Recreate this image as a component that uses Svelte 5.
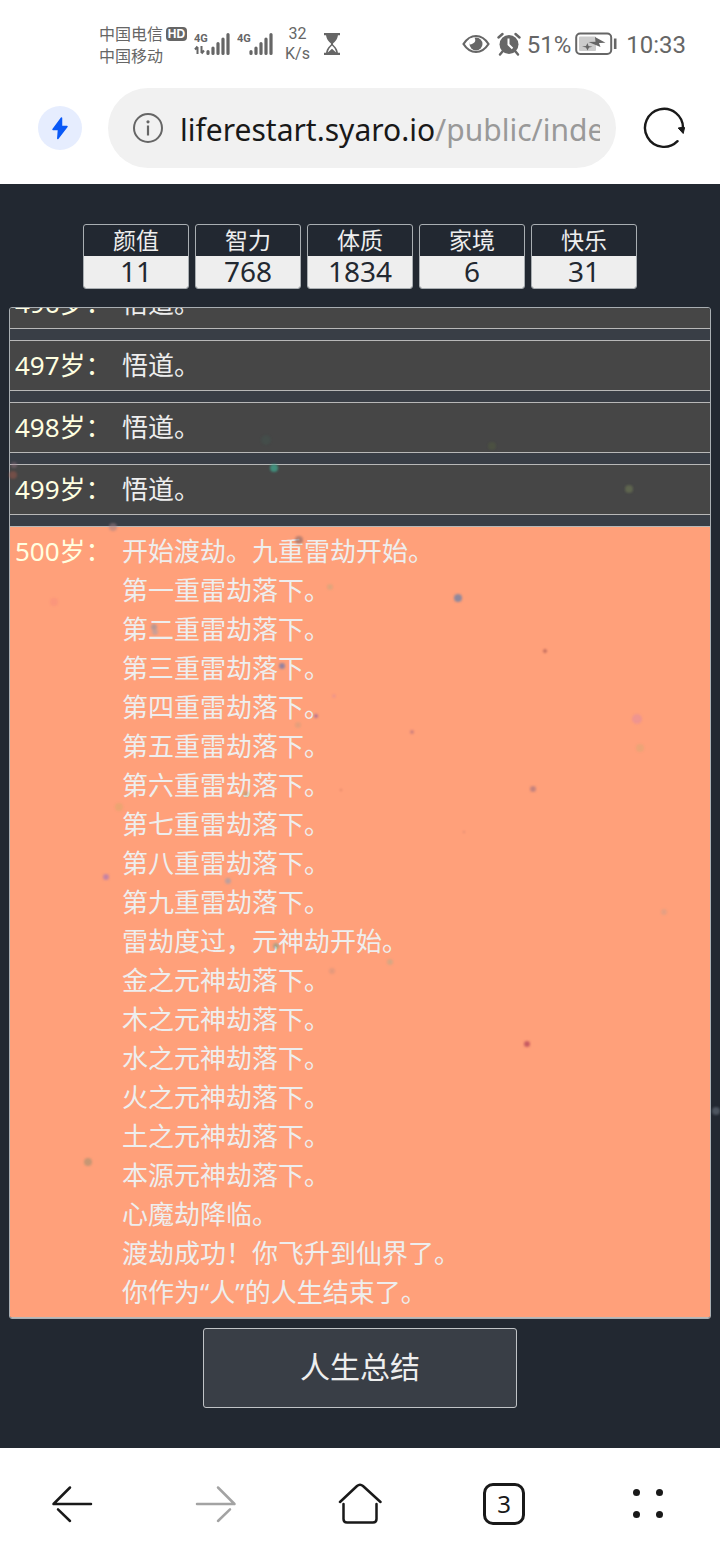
<script>
  const stats = [
    { name: '颜值', value: 11 },
    { name: '智力', value: 768 },
    { name: '体质', value: 1834 },
    { name: '家境', value: 6 },
    { name: '快乐', value: 31 }
  ];

  const years = [
    { age: 496, events: ['悟道。'] },
    { age: 497, events: ['悟道。'] },
    { age: 498, events: ['悟道。'] },
    { age: 499, events: ['悟道。'] },
    {
      age: 500,
      grade: 3,
      events: [
        '开始渡劫。九重雷劫开始。',
        '第一重雷劫落下。',
        '第二重雷劫落下。',
        '第三重雷劫落下。',
        '第四重雷劫落下。',
        '第五重雷劫落下。',
        '第六重雷劫落下。',
        '第七重雷劫落下。',
        '第八重雷劫落下。',
        '第九重雷劫落下。',
        '雷劫度过，元神劫开始。',
        '金之元神劫落下。',
        '木之元神劫落下。',
        '水之元神劫落下。',
        '火之元神劫落下。',
        '土之元神劫落下。',
        '本源元神劫落下。',
        '心魔劫降临。',
        '渡劫成功！你飞升到仙界了。',
        '你作为“人”的人生结束了。'
      ]
    }
  ];

  const particles = [
    [274, 284, 4, '#3fa08a', 0.8],
    [266, 256, 5, '#3f6a5c', 0.2],
    [13, 291, 4, '#a0584a', 0.5],
    [14, 281, 3, '#a07a8a', 0.4],
    [113, 343, 4, '#a08088', 0.5],
    [299, 356, 4, '#8a6a6a', 0.6],
    [492, 262, 4, '#5a6a3a', 0.3],
    [629, 305, 4, '#6f7a55', 0.6],
    [458, 414, 4, '#6a80a8', 0.75],
    [545, 467, 2, '#a05050', 0.6],
    [637, 535, 5, '#d080b8', 0.35],
    [640, 564, 4, '#c0b070', 0.3],
    [412, 548, 2, '#a06080', 0.5],
    [533, 605, 3, '#a07080', 0.6],
    [154, 443, 3, '#7090b0', 0.5],
    [155, 448, 3, '#80a0c0', 0.4],
    [282, 482, 3, '#5070b8', 0.6],
    [316, 532, 2, '#9060a0', 0.7],
    [334, 512, 2, '#d080b0', 0.3],
    [298, 541, 3, '#b0a080', 0.3],
    [330, 403, 3, '#a0b080', 0.3],
    [54, 418, 4, '#f08080', 0.3],
    [246, 610, 3, '#90a070', 0.4],
    [119, 623, 4, '#c0b060', 0.3],
    [106, 693, 3, '#a070c0', 0.6],
    [228, 697, 3, '#80a0c0', 0.5],
    [276, 762, 3, '#60a090', 0.5],
    [390, 778, 3, '#a0b090', 0.4],
    [332, 787, 3, '#c09080', 0.4],
    [664, 728, 3, '#c0a090', 0.4],
    [341, 606, 1, '#b06050', 0.5],
    [464, 648, 1, '#b07070', 0.5],
    [527, 860, 3, '#b04058', 0.7],
    [88, 978, 4, '#a09070', 0.6],
    [716, 927, 4, '#6a7480', 0.6]
  ];
</script>

{#snippet signal(data)}
  <svg class="signal" viewBox="0 0 38 26" aria-hidden="true">
    <text x="0" y="11">4G</text>
    {#if data}
      <path d="M3.5 23v-7M1 18.5l2.5-3M7.5 15v7M10 19.5l-2.5 3" fill="none" stroke="currentColor" stroke-width="2" />
    {/if}
    <path
      d="M14 20.500v2M19 17v5.500M24 12.500v10M29 8v14.500M34 3.500v19"
      fill="none"
      stroke="currentColor"
      stroke-width="3.200"
      stroke-linecap="round"
    />
  </svg>
{/snippet}

<div class="phone">
  <header class="status">
    <div class="carrier">
      <span>中国电信</span>
      <span>中国移动</span>
    </div>
    <span class="hd">HD</span>
    {@render signal(true)}
    {@render signal(false)}
    <div class="speed">
      <span>32</span>
      <span>K/s</span>
    </div>
    <svg class="hourglass" viewBox="0 0 18 22" aria-hidden="true">
      <path d="M1 1.200h16M1 20.800h16" stroke="currentColor" stroke-width="2.200" />
      <path d="M3 1h12c0 5-3 7.500-5 9.500v1c2 2 5 4.500 5 9.500H3c0-5 3-7.500 5-9.500v-1C6 8.500 3 6 3 1z" fill="currentColor" />
      <path d="M4.800 19.500c.5-3 2.200-5.200 4.200-7 2 1.800 3.700 4 4.200 7L9 15.800z" fill="#fff" />
    </svg>

    <div class="right">
      <svg class="eye" viewBox="0 0 28 20" aria-hidden="true">
        <path d="M1.500 10C5 4.500 9 2 14 2s9 2.500 12.500 8C23 15.500 19 18 14 18S5 15.500 1.500 10z" fill="none" stroke="currentColor" stroke-width="2.200" />
        <circle cx="14" cy="10" r="6.500" fill="currentColor" />
        <path d="M12.500 3.500c1.800 3 .5 6.500-5 7L7 5z" fill="#fff" />
      </svg>
      <svg class="alarm" viewBox="0 0 24 24" aria-hidden="true">
        <circle cx="12" cy="12.500" r="9.500" fill="currentColor" />
        <path d="M1.500 5.500 5.500 2M22.500 5.500 18.500 2M5.500 19.500 3 22.500M18.500 19.500l2.500 3" stroke="currentColor" stroke-width="2.400" stroke-linecap="round" />
        <path d="M11.500 6.500v6l4 4" fill="none" stroke="#fff" stroke-width="2" />
      </svg>
      <span>51%</span>
      <svg class="battery" viewBox="0 0 42 24" aria-hidden="true">
        <rect x="1.200" y="1.500" width="35" height="20.500" rx="4" fill="none" stroke="currentColor" stroke-width="2" />
        <rect x="4" y="4.500" width="17" height="14.500" rx="1" fill="#ccc" />
        <path d="M13.500 10l7-.2L20 5l10.500 5.800-6.500.2L25.500 15z" fill="currentColor" />
        <path d="M7 14.500l4-.5L12.500 11l1 3 4 .8-3.500.7-1.500 3-1.500-3z" fill="currentColor" />
        <path d="M40.200 6.500v10.500" stroke="currentColor" stroke-width="2.600" />
      </svg>
      <time>10:33</time>
    </div>
  </header>

  <div class="address">
    <button class="boost" aria-label="加速">
      <svg viewBox="0 0 44 44" aria-hidden="true">
        <path d="M23.500 12 15 23.500h5.500L19.800 32.500 29 20.500h-5.500z" fill="#0a59f7" stroke="#0a59f7" stroke-width="1.500" stroke-linejoin="round" />
      </svg>
    </button>
    <button class="url">
      <svg viewBox="0 0 32 32" aria-hidden="true">
        <circle cx="16" cy="16" r="14" fill="none" stroke="#666" stroke-width="2" />
        <circle cx="16" cy="9.800" r="1.600" fill="#666" />
        <path d="M16 13.500v10" stroke="#666" stroke-width="2.200" />
      </svg>
      <span class="text">liferestart.syaro.io<span class="path">/public/index.html</span></span>
    </button>
    <button class="reload" aria-label="刷新">
      <svg viewBox="0 0 44 44" aria-hidden="true">
        <path d="M35.500 35.200A19 19 0 1 1 41 22.500" fill="none" stroke="#191919" stroke-width="2.400" stroke-linecap="round" />
        <path d="M36.200 22l5.800-1 .5 1-1.300 5.500z" fill="#191919" stroke="#191919" stroke-linejoin="round" />
      </svg>
    </button>
  </div>

  <main>
    <ul class="stats">
      {#each stats as stat}
        <li><span class="name">{stat.name}</span><span class="value">{stat.value}</span></li>
      {/each}
    </ul>

    <div class="trajectory">
      <ol>
        {#each years as year}
          <li class:grade3={year.grade === 3}>
            <span class="age">{year.age}岁：</span>
            <div class="events">
              {#each year.events as event}
                <p>{event}</p>
              {/each}
            </div>
          </li>
        {/each}
      </ol>
    </div>

    <button class="summary">人生总结</button>

    <svg class="particles" aria-hidden="true">
      {#each particles as [x, y, r, color, opacity]}
        <circle cx={x} cy={y} {r} fill={color} {opacity} />
      {/each}
    </svg>
  </main>

  <nav>
    <button aria-label="后退">
      <svg viewBox="0 0 44 44" aria-hidden="true">
        <path d="M41 22H4M20 5.500 3.500 22M8 27.300 20 39" />
      </svg>
    </button>
    <button aria-label="前进" disabled>
      <svg viewBox="0 0 44 44" aria-hidden="true">
        <path d="M3 22H40M24 5.500 40.500 22M36 27.300 24 39" />
      </svg>
    </button>
    <button aria-label="主页">
      <svg viewBox="0 0 44 44" aria-hidden="true">
        <path d="M2 20 19 4q3-2.500 6 0L42.500 20M5.500 22v15q0 3.500 3.500 3.500h26q3.500 0 3.500-3.500V22" />
      </svg>
    </button>
    <button aria-label="标签页"><span class="tabs">3</span></button>
    <button aria-label="菜单">
      <svg class="dots" viewBox="0 0 44 44" aria-hidden="true">
        <circle cx="10.500" cy="10.500" r="3.500" />
        <circle cx="33.500" cy="10.500" r="3.500" />
        <circle cx="10.500" cy="32.500" r="3.500" />
        <circle cx="33.500" cy="32.500" r="3.500" />
      </svg>
    </button>
  </nav>
</div>

<style>
  :global(body) {
    background: #fff;
  }

  .phone {
    display: flex;
    flex-direction: column;
    height: 100vh;
    font-family: 'Noto Sans', 'Noto Sans CJK SC', sans-serif;
  }

  button {
    margin: 0;
    padding: 0;
    border: 0;
    background: none;
    font: inherit;
    color: inherit;
  }

  svg {
    display: block;
    flex: none;
  }

  ul,
  ol,
  p {
    margin: 0;
    padding: 0;
    list-style: none;
  }

  .status {
    display: flex;
    align-items: center;
    flex: none;
    height: 88px;
    padding: 0 34px 0 99px;
    color: #666;
    font-family: 'Noto Sans CJK SC', sans-serif;
  }

  .carrier,
  .speed {
    display: flex;
    flex-direction: column;
    font-size: 16px;
    line-height: 22px;
  }

  .hd {
    align-self: flex-start;
    margin: 27px 7px 0 3px;
    width: 21px;
    border-radius: 4px;
    background: #666;
    color: #fff;
    font: bold 12px/14px 'Liberation Sans', sans-serif;
    text-align: center;
  }

  .signal {
    width: 38px;
    height: 26px;
    margin-right: 5px;
  }

  .signal text {
    font: bold 11px Roboto, 'Liberation Sans', sans-serif;
    fill: currentColor;
  }

  .speed {
    align-items: center;
    line-height: 20px;
    margin-left: 5px;
    font-family: Roboto, sans-serif;
  }

  .hourglass {
    width: 18px;
    height: 22px;
    margin-left: 13px;
  }

  .right {
    display: flex;
    align-items: center;
    margin-left: auto;
    font-family: Roboto, sans-serif;
    font-size: 24px;
    line-height: 24px;
  }

  .right span,
  .right time {
    padding-top: 2px;
  }

  .eye {
    width: 28px;
    height: 20px;
  }

  .alarm {
    width: 24px;
    height: 24px;
    margin: 0 6px 0 7px;
  }

  .battery {
    width: 42px;
    height: 24px;
    margin: 0 9px 0 4px;
  }

  .address {
    display: flex;
    align-items: center;
    flex: none;
    gap: 26px;
    padding: 0 34px 16px 38px;
  }

  .boost {
    border-radius: 50%;
    background: #e6edfe;
  }

  .boost svg,
  .reload svg {
    width: 44px;
    height: 44px;
  }

  .url {
    display: flex;
    align-items: center;
    flex: 1;
    min-width: 0;
    gap: 16px;
    height: 80px;
    padding: 0 16px 0 24px;
    border-radius: 40px;
    background: #f1f1f1;
    color: #191919;
    font-size: 30px;
    text-align: left;
  }

  .url svg {
    width: 32px;
    height: 32px;
  }

  .url .text {
    flex: 1;
    min-width: 0;
    padding-top: 2px;
    overflow: hidden;
    white-space: nowrap;
  }

  .url .path {
    color: #999;
  }

  main {
    position: relative;
    display: flex;
    flex-direction: column;
    align-items: center;
    flex: 1;
    min-height: 0;
    padding: 40px 9px;
    background: #222831;
    color: #eee;
  }

  .stats {
    display: flex;
    gap: 6px;
    margin-bottom: 18px;
  }

  .stats li {
    display: flex;
    flex-direction: column;
    width: 104px;
    border: 1px solid #a9aeb2;
    border-radius: 3px;
    overflow: hidden;
    text-align: center;
  }

  .name {
    font-size: 23px;
    line-height: 31px;
  }

  .value {
    height: 32px;
    background: #eee;
    color: #222831;
    font-size: 28px;
    line-height: 30px;
  }

  .trajectory {
    display: flex;
    flex-direction: column-reverse;
    align-self: stretch;
    flex: 1;
    min-height: 0;
    border: 1px solid #a9aeb2;
    border-radius: 3px;
    background: #393e46;
    overflow-y: auto;
    scrollbar-width: none;
    font-size: 26px;
    line-height: 39px;
  }

  .trajectory li {
    display: flex;
    margin-top: 11px;
    padding: 5px;
    border: solid #b8b8b8;
    border-width: 1px 0;
    background: #464646;
  }

  .trajectory li.grade3 {
    background: #ffa07a;
  }

  .age {
    flex: none;
    width: 107px;
    color: #ffffe0;
    white-space: nowrap;
  }

  .summary {
    width: 314px;
    height: 80px;
    margin-top: 9px;
    padding-bottom: 6px;
    border: 1px solid #c0c3c6;
    border-radius: 3px;
    background: #393e46;
    font-size: 30px;
  }

  .particles {
    position: absolute;
    inset: 0;
    width: 100%;
    height: 100%;
    pointer-events: none;
  }

  .particles circle {
    filter: blur(1px);
  }

  nav {
    display: flex;
    flex: none;
    height: 112px;
    color: #191919;
  }

  nav button {
    display: flex;
    align-items: center;
    justify-content: center;
    flex: 1;
  }

  nav button:disabled {
    color: #a3a3a3;
  }

  nav svg {
    width: 44px;
    height: 44px;
    fill: none;
    stroke: currentColor;
    stroke-width: 2.5px;
    stroke-linecap: round;
    stroke-linejoin: round;
  }

  nav .dots {
    fill: currentColor;
    stroke: none;
  }

  .tabs {
    width: 36px;
    border: 3px solid #191919;
    border-radius: 10px;
    font-size: 24px;
    line-height: 36px;
    text-align: center;
  }
</style>
